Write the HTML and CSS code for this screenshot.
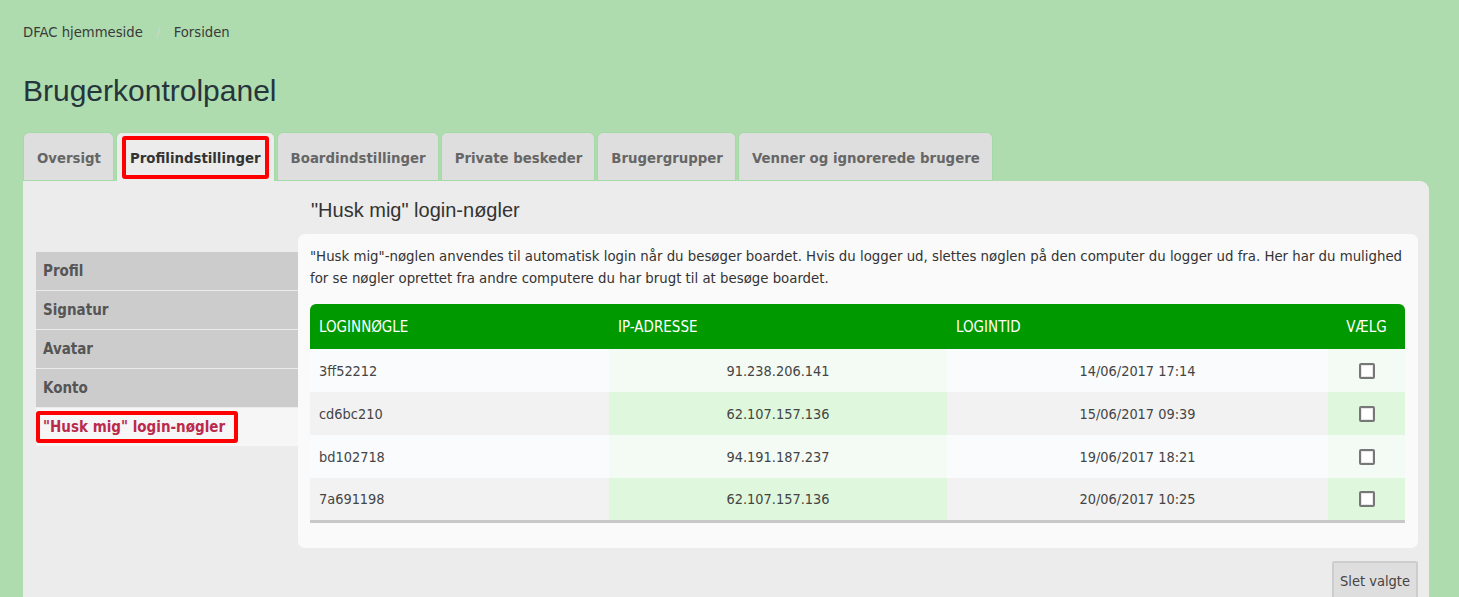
FILE: index.html
```html
<!DOCTYPE html>
<html lang="da">

<head>
    <meta charset="UTF-8">
    <meta name="viewport" content="width=device-width, initial-scale=1.0">
    <title>Brugerkontrolpanel</title>

    <link rel="stylesheet" href="styles.css">
</head>

<body>
    <div class="page">
        <div class="crumbs">
            <a href="#">DFAC hjemmeside</a>
            <span class="sep">/</span>
            <a href="#">Forsiden</a>
        </div>

        <h1 class="title">Brugerkontrolpanel</h1>

        <ul class="tabs">
            <li><a href="#">Oversigt</a></li>
            <li class="active"><a href="#" class="marked">Profilindstillinger</a></li>
            <li><a href="#">Boardindstillinger</a></li>
            <li><a href="#">Private beskeder</a></li>
            <li><a href="#">Brugergrupper</a></li>
            <li><a href="#">Venner og ignorerede brugere</a></li>
        </ul>

        <div class="panel">
            <ul class="sidemenu">
                <li><a href="#">Profil</a></li>
                <li><a href="#">Signatur</a></li>
                <li><a href="#">Avatar</a></li>
                <li><a href="#">Konto</a></li>
                <li class="active"><a href="#" class="marked">"Husk mig" login-nøgler</a></li>
            </ul>

            <div class="main">
                <h2 class="heading">"Husk mig" login-nøgler</h2>

                <div class="box">
                    <p class="intro">"Husk mig"-nøglen anvendes til automatisk login når du besøger boardet. Hvis du logger ud, slettes nøglen på den computer du logger ud fra. Her har du mulighed for se nøgler oprettet fra andre computere du har brugt til at besøge boardet.</p>

                    <table class="keys">
                        <thead>
                            <tr>
                                <th class="c1">Loginnøgle</th>
                                <th class="c2">IP-adresse</th>
                                <th class="c3">Logintid</th>
                                <th class="c4">Vælg</th>
                            </tr>
                        </thead>
                        <tbody>
                            <tr>
                                <td class="c1">3ff52212</td>
                                <td class="c2">91.238.206.141</td>
                                <td class="c3">14/06/2017 17:14</td>
                                <td class="c4"><span class="check"></span></td>
                            </tr>
                            <tr>
                                <td class="c1">cd6bc210</td>
                                <td class="c2">62.107.157.136</td>
                                <td class="c3">15/06/2017 09:39</td>
                                <td class="c4"><span class="check"></span></td>
                            </tr>
                            <tr>
                                <td class="c1">bd102718</td>
                                <td class="c2">94.191.187.237</td>
                                <td class="c3">19/06/2017 18:21</td>
                                <td class="c4"><span class="check"></span></td>
                            </tr>
                            <tr>
                                <td class="c1">7a691198</td>
                                <td class="c2">62.107.157.136</td>
                                <td class="c3">20/06/2017 10:25</td>
                                <td class="c4"><span class="check"></span></td>
                            </tr>
                        </tbody>
                    </table>
                </div>

                <div class="actions">
                    <button class="btn">Slet valgte</button>
                </div>
            </div>
        </div>
    </div>
</body>

</html>
```

FILE: styles.css
```css
*{
    margin: 0;
    padding: 0;
    box-sizing: border-box;
}

body{
    background-color: #aedcae;
    font-family: "DejaVu Sans Condensed", "DejaVu Sans", sans-serif;
    color: #333;
}

a{
    text-decoration: none;
    color: inherit;
}

ul{
    list-style: none;
}

.page{
    padding: 0 30px 0 23px;
}

.crumbs{
    padding-top: 22px;
    font-size: 14.7px;
    line-height: 20px;
    color: #3a3a3a;
}

.crumbs .sep{
    color: #c9d9c9;
    margin: 0 9px;
}

.title{
    font-family: "Liberation Sans", Arial, sans-serif;
    font-weight: normal;
    font-size: 30px;
    line-height: 36px;
    color: #26343c;
    margin-top: 31px;
}

.tabs{
    display: flex;
    gap: 2px;
    margin-top: 23px;
}

.tabs li{
    background-color: #dedede;
    border: 1px solid #a5d9a5;
    border-bottom: none;
    border-radius: 6px 6px 0 0;
    height: 49px;
    padding: 0 12px 0 13px;
    display: flex;
    align-items: center;
    font-weight: bold;
    font-size: 14.8px;
    color: #666;
    box-shadow: inset 0 -1px 0 #a5d9a5;
}

.tabs li.active{
    background-color: #ececec;
    color: #333;
    padding: 0 5px;
    box-shadow: none;
}

.tabs li.active a{
    padding: 9px 4px;
}

.marked{
    border: 4px solid #ff0000;
    border-radius: 3px;
}

.panel{
    background-color: #ececec;
    border-radius: 0 9px 0 0;
    display: flex;
    padding: 0 11px 0 13px;
    min-height: 420px;
}

.sidemenu{
    width: 262px;
    margin-top: 71px;
}

.sidemenu li{
    background-color: #cccccc;
    border-bottom: 1px solid #ececec;
    height: 39px;
    display: flex;
    align-items: center;
    padding-left: 7px;
    font-weight: bold;
    font-size: 15px;
    color: #555;
}

.sidemenu li.active{
    background-color: #f6f6f6;
    padding-left: 0;
    height: 38px;
    border-bottom: none;
    color: #bb2a4b;
}

.sidemenu li.active a{
    padding: 3px 9px 3px 3px;
}

.main{
    flex: 1;
}

.heading{
    font-family: "Liberation Sans", Arial, sans-serif;
    font-weight: normal;
    font-size: 20px;
    line-height: 24px;
    color: #333;
    margin: 17px 0 0 13px;
}

.box{
    background-color: #fafafa;
    border-radius: 7px;
    margin-top: 12px;
    padding: 11px 13px 25px 12px;
}

.intro{
    font-size: 14.8px;
    line-height: 22px;
    color: #333;
}

.keys{
    width: 100%;
    border-collapse: collapse;
    margin-top: 15px;
    font-size: 14px;
    border-bottom: 3px solid #c8c8c8;
}

.keys th{
    background-color: #009900;
    color: #fff;
    font-weight: normal;
    font-size: 15px;
    text-transform: uppercase;
    text-align: left;
    height: 45px;
    padding: 0 9px;
}

.keys th.c1{
    border-radius: 6px 0 0 0;
}

.keys th.c4{
    border-radius: 0 6px 0 0;
    text-align: center;
}

.keys td{
    height: 43px;
    padding: 0 9px;
    color: #444;
    font-size: 14.4px;
    text-align: center;
}

.keys td.c1{
    text-align: left;
}

.keys .c1{ width: 299px; }
.keys .c2{ width: 338px; }
.keys .c3{ width: 381px; }
.keys .c4{ width: 77px; }

.keys tbody tr:nth-child(odd){
    background-color: #f9fbfc;
}

.keys tbody tr:nth-child(even){
    background-color: #f2f2f2;
}

.keys tbody tr:nth-child(odd) td.c2,
.keys tbody tr:nth-child(odd) td.c4{
    background-color: #f4fbf5;
}

.keys tbody tr:nth-child(even) td.c2,
.keys tbody tr:nth-child(even) td.c4{
    background-color: #dff8dd;
}

.check{
    display: inline-block;
    width: 16px;
    height: 16px;
    border: 2px solid #777;
    border-radius: 2px;
    background-color: #fff;
    box-shadow: inset 0 0 0 1px #e6e6e6;
    vertical-align: middle;
}

.actions{
    display: flex;
    justify-content: flex-end;
    margin-top: 13px;
}

.btn{
    font-family: "DejaVu Sans Condensed", "DejaVu Sans", sans-serif;
    font-size: 14.5px;
    color: #444;
    background-color: #dedede;
    border: 2px solid #cdcdcd;
    border-radius: 2px;
    padding: 0 6px;
    height: 40px;
}
```
